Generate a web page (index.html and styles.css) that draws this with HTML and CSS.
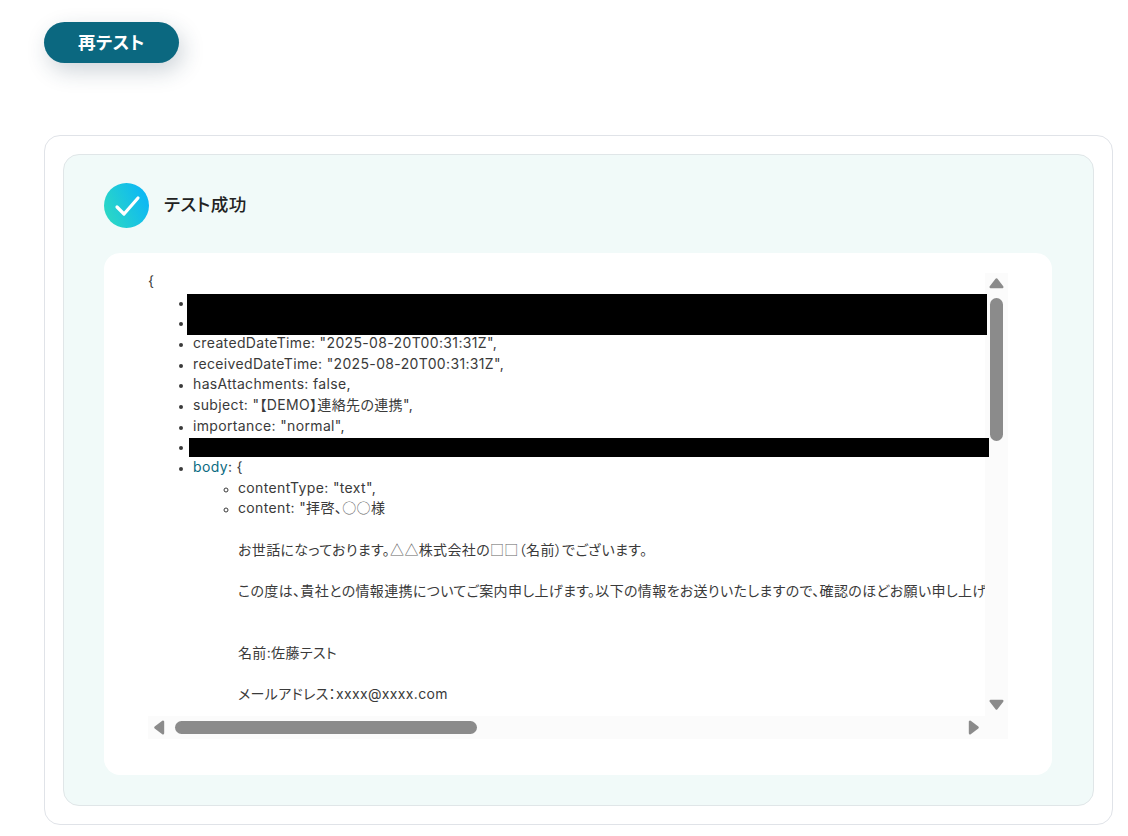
FILE: index.html
```html
<!DOCTYPE html>
<html lang="ja">
<head>
<meta charset="utf-8">
<title>テスト成功</title>
<link rel="stylesheet" href="styles.css">
</head>
<body>
<div class="page">
  <button class="retest" type="button">再テスト</button>
  <section class="outer">
    <div class="result">
      <header class="result-head">
        <svg class="ok-icon" width="45" height="45" viewBox="0 0 45 45" aria-hidden="true">
          <defs>
            <linearGradient id="okg" x1="0" y1="1" x2="1" y2="0.55">
              <stop offset="0" stop-color="#2fdcbe"/>
              <stop offset="1" stop-color="#0fb9f2"/>
            </linearGradient>
          </defs>
          <circle cx="22.5" cy="22.5" r="22.5" fill="url(#okg)"/>
          <path d="M13 24l7 7L34 15" fill="none" stroke="#fff" stroke-width="3.2" stroke-linecap="round" stroke-linejoin="round"/>
        </svg>
        <h2 class="result-title">テスト成功</h2>
      </header>
      <div class="panel">
        <div class="scroller">
          <div class="viewport">
            <div class="code">
              <div>{</div>
              <ul class="lv1">
                <li>&nbsp;</li>
                <li>&nbsp;</li>
                <li>createdDateTime: "2025-08-20T00:31:31Z",</li>
                <li>receivedDateTime: "2025-08-20T00:31:31Z",</li>
                <li>hasAttachments: false,</li>
                <li>subject: "【DEMO】連絡先の連携",</li>
                <li>importance: "normal",</li>
                <li>&nbsp;</li>
                <li><span class="key">body</span>: {
                  <ul class="lv2">
                    <li>contentType: "text",</li>
                    <li>content: "拝啓、<span class="sym">○○</span>様<br><br>お世話になっております。<span class="sym">△△</span>株式会社の<span class="sym">□□</span>（名前）でございます。<br><br>この度は、貴社との情報連携についてご案内申し上げます。以下の情報をお送りいたしますので、確認のほどお願い申し上げます。<br><br><br>名前:佐藤テスト<br><br>メールアドレス：xxxx@xxxx.com</li>
                  </ul>
                </li>
              </ul>
            </div>
          </div>
          <div class="vbar">
            <svg class="arrow" width="15" height="12" viewBox="0 0 15 12" aria-hidden="true"><path d="M7.5 2.4L13.3 10H1.7Z" fill="#8b8b8b" stroke="#8b8b8b" stroke-width="2.4" stroke-linejoin="round"/></svg>
            <div class="vtrack"><div class="vthumb"></div></div>
            <svg class="arrow" width="15" height="12" viewBox="0 0 15 12" aria-hidden="true"><path d="M7.5 9.6L13.3 2H1.7Z" fill="#8b8b8b" stroke="#8b8b8b" stroke-width="2.4" stroke-linejoin="round"/></svg>
          </div>
          <div class="hbar">
            <svg class="arrow" width="12" height="15" viewBox="0 0 12 15" aria-hidden="true"><path d="M2.4 7.5L10 1.7V13.3Z" fill="#8b8b8b" stroke="#8b8b8b" stroke-width="2.4" stroke-linejoin="round"/></svg>
            <div class="htrack"><div class="hthumb"></div></div>
            <svg class="arrow" width="12" height="15" viewBox="0 0 12 15" aria-hidden="true"><path d="M9.6 7.5L2 1.7V13.3Z" fill="#8b8b8b" stroke="#8b8b8b" stroke-width="2.4" stroke-linejoin="round"/></svg>
          </div>
          <div class="corner"></div>
          <div class="redact redact-a"></div>
          <div class="redact redact-b"></div>
        </div>
      </div>
    </div>
  </section>
</div>
</body>
</html>
```
FILE: styles.css
```css
* { box-sizing: border-box; }
html, body { margin: 0; padding: 0; background: #fff; height: 100%; overflow: hidden; }
body {
  font-family: Inter, "Noto Sans CJK JP", sans-serif;
  color: #3a3a3a;
  font-feature-settings: "palt";
}
.page { padding: 22px 15px 0 44px; display: flex; flex-direction: column; align-items: flex-start; }
.retest {
  width: 135px; height: 41px; border: 0; border-radius: 21px;
  background: #0b6880; color: #fff;
  font: 700 17.6px/40px Inter, "Noto Sans CJK JP", sans-serif;
  font-feature-settings: "palt";
  letter-spacing: .44px;
  box-shadow: 4px 8px 22px rgba(30, 60, 80, .22);
  padding: 0;
}
.outer {
  margin-top: 72px; width: 1069px; height: 690px;
  border: 1px solid #e0e3e8; border-radius: 16px; padding: 18px;
}
.result {
  height: 100%; background: #f1faf9;
  border: 1px solid #e0e6e8; border-radius: 16px;
  padding: 28px 41px 30px 40px;
  display: flex; flex-direction: column;
}
.result-head { display: flex; align-items: center; gap: 15px; height: 45px; margin-bottom: 25px; }
.ok-icon { flex: none; }
.result-title { margin: 0 0 4px; font-size: 17.6px; font-weight: 500; letter-spacing: .44px; color: #222; }
.panel { flex: 1; background: #fff; border-radius: 16px; padding: 20px 44px 36px; }
.scroller {
  position: relative;
  width: 860px; height: 466px;
  display: grid; grid-template-columns: 837px 23px; grid-template-rows: 443px 23px;
}
.viewport { overflow: hidden; }
.code { width: 1400px; margin-top: -2px; font-size: 14px; letter-spacing: .35px; line-height: 20.65px; white-space: nowrap; }
.code ul { margin: 0; padding: 0 0 0 45px; }
.code li::marker { font-size: 11.5px; }
.lv1 { list-style: disc; }
.lv2 { list-style: circle; }
.key { color: #0b6b82; }
.sym { font-family: "Noto Sans CJK JP", sans-serif; font-feature-settings: normal; color: #666; line-height: 0; }
.redact { position: absolute; background: #000; width: 800px; }
.redact-a { left: 39px; top: 21px; height: 41px; }
.redact-b { left: 41px; top: 165px; height: 19px; }
.vbar { background: #fbfbfb; display: flex; flex-direction: column; align-items: center; padding: 4px 0 5px; }
.vtrack { flex: 1; width: 100%; padding: 9px 5px 0 5px; }
.vthumb { width: 13px; height: 143px; background: #8b8b8b; border-radius: 7px; }
.hbar { background: #fbfbfb; display: flex; align-items: center; padding: 0 5px; }
.htrack { flex: 1; height: 100%; padding: 5px 0 0 10px; }
.hthumb { width: 302px; height: 13px; background: #8b8b8b; border-radius: 7px; }
.corner { background: #fbfbfb; }
.arrow { flex: none; display: block; }
```
